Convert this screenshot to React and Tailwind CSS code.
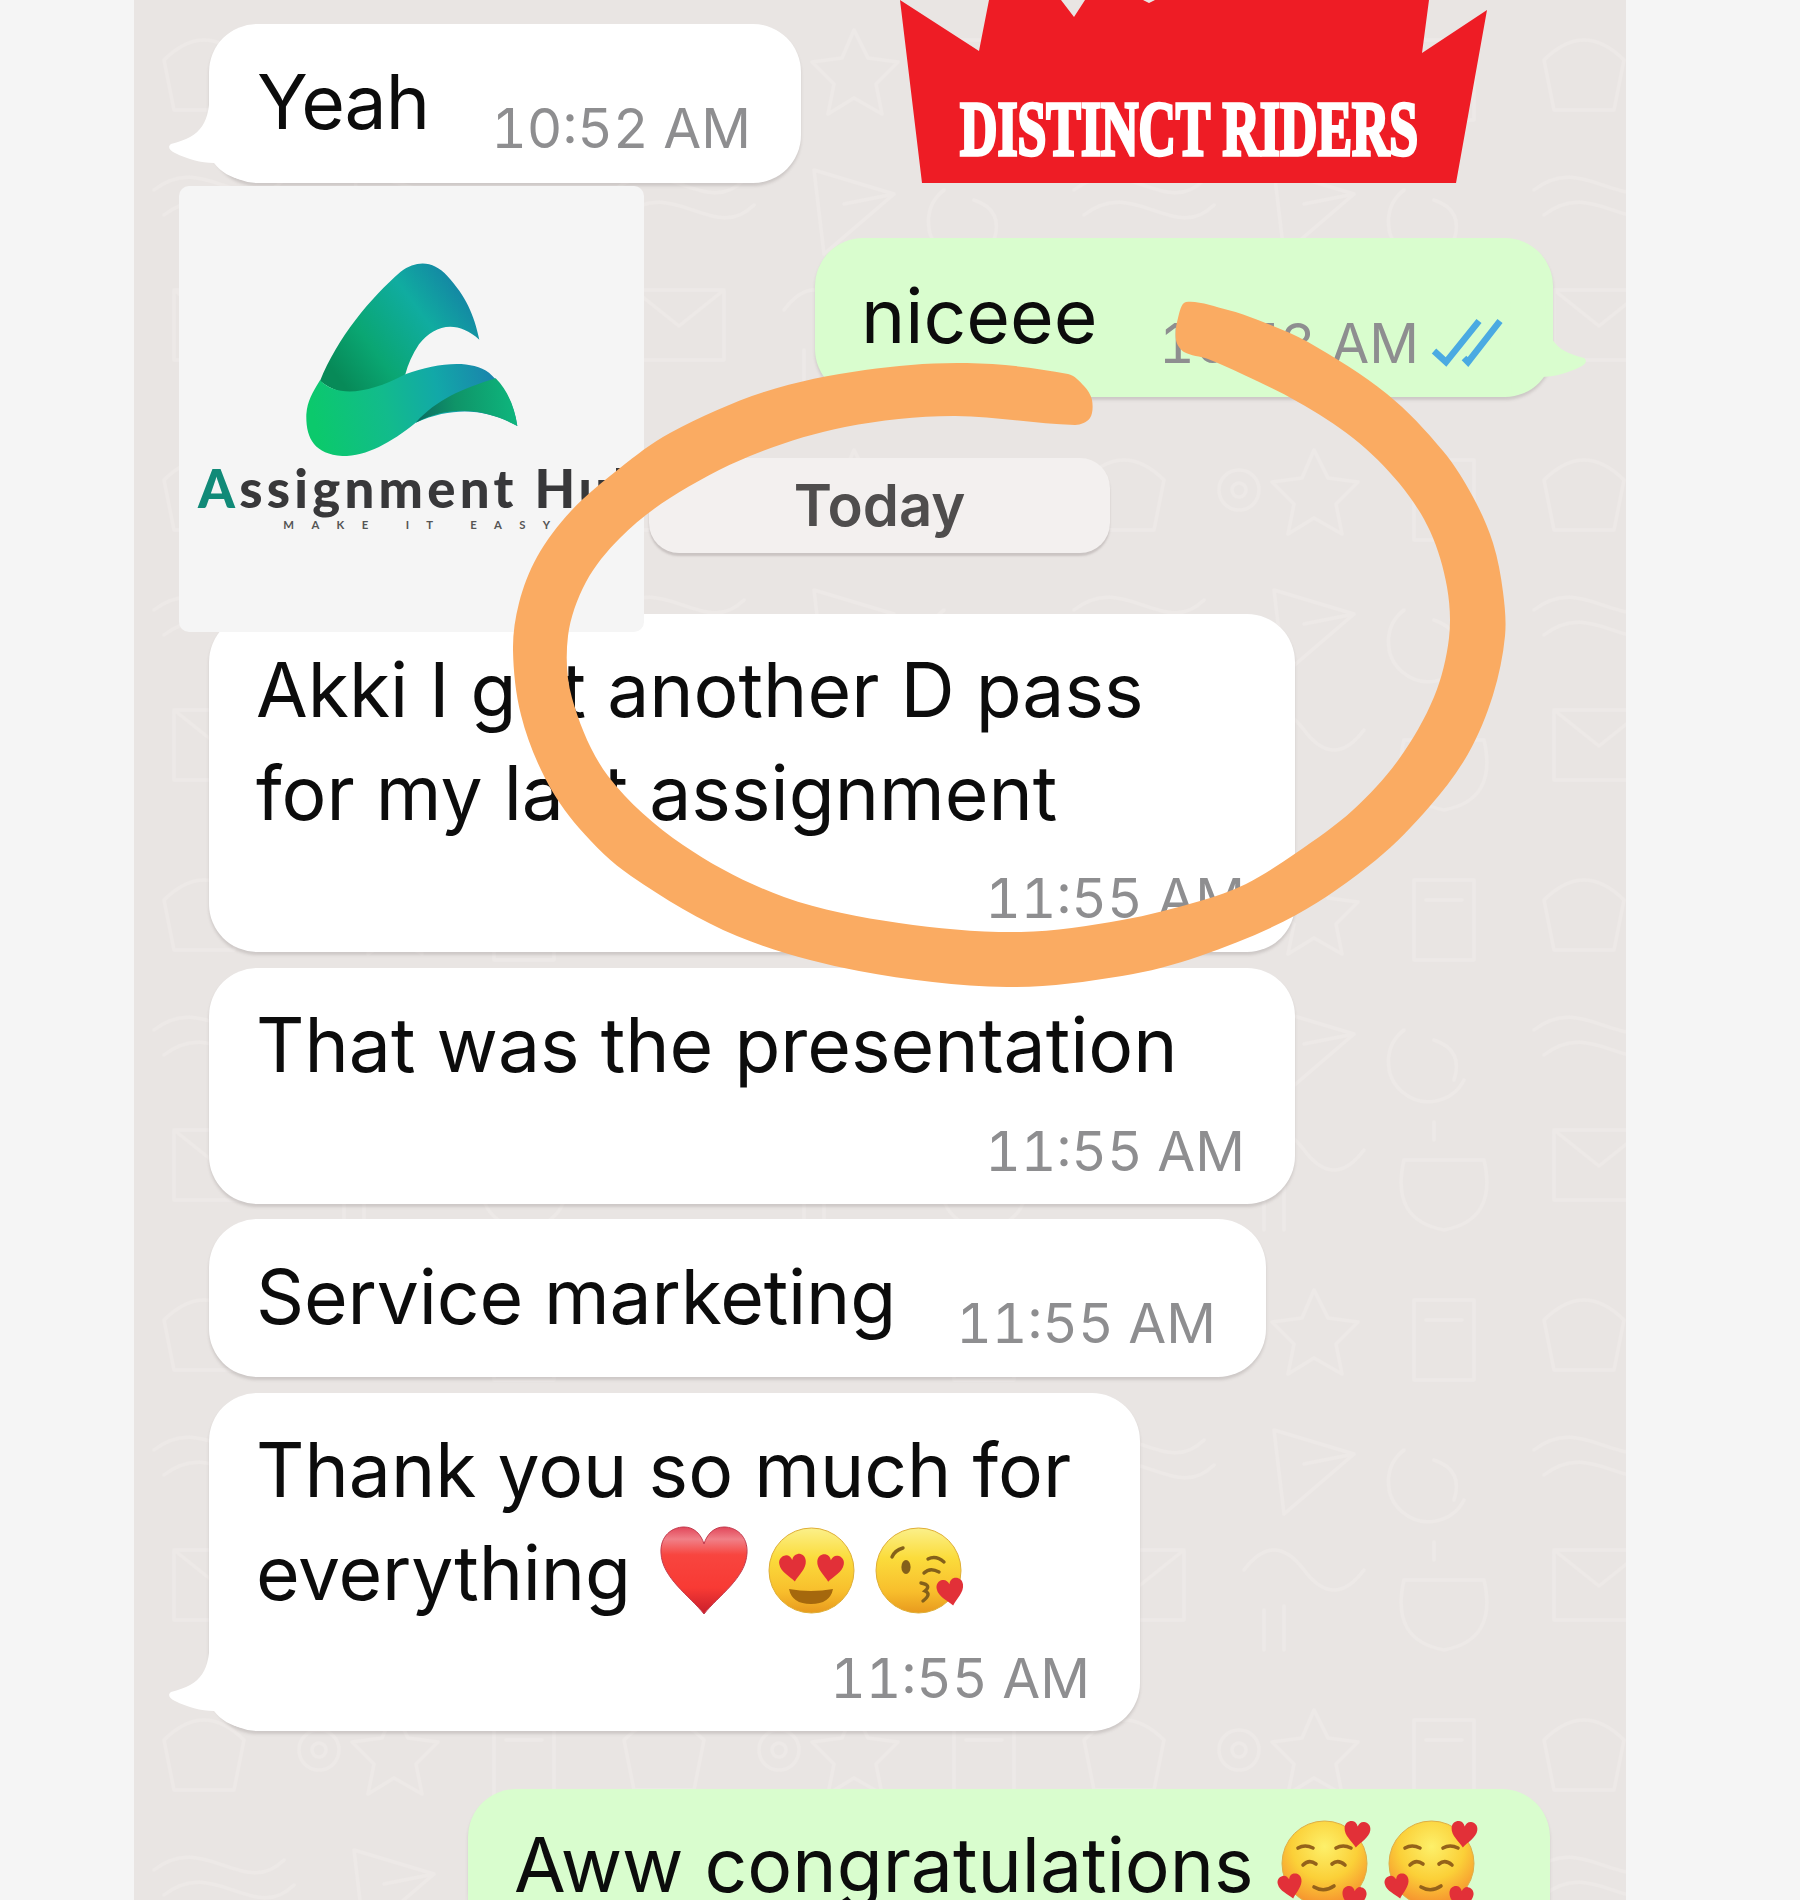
import React from "react";

const HEART = "M44 88 C30 70 2 52 1 27 C0 10 12 1 24 1 C34 1 41 8 44 18 C47 8 54 1 64 1 C76 1 88 10 87 27 C86 52 58 70 44 88Z";

// Points of the marker ring: outer edge clockwise, then inner edge back.
const OUTER = [[1186,302],[1228,310],[1258,320],[1308,342],[1387,394],[1443,451],[1473,497],[1493,543],[1503,592],[1505,636],[1493,695],[1468,754],[1430,806],[1376,860],[1296,915],[1200,956],[1122,976],[1007,987],[859,971],[737,936],[631,876],[579,828],[545,778],[521,715],[513,650],[519,603],[537,557],[571,511],[620,468],[670,433],[764,392],[865,370],[967,363],[1068,374],[1084,386]];
const INNER = [[1092,400],[1090,418],[1075,425],[953,416],[845,427],[750,456],[670,498],[620,538],[586,582],[568,636],[572,698],[608,776],[683,845],[784,897],[899,923],[1021,932],[1122,920],[1200,901],[1246,884],[1296,853],[1353,810],[1399,759],[1434,697],[1449,638],[1447,587],[1430,531],[1399,483],[1353,438],[1298,402],[1242,374],[1208,359],[1184,352],[1176,340],[1178,318]];

function smooth(points) {
  const n = points.length;
  let d = `M${points[0][0]} ${points[0][1]}`;
  for (let i = 0; i < n; i++) {
    const a = points[(i - 1 + n) % n];
    const b = points[i];
    const c = points[(i + 1) % n];
    const e = points[(i + 2) % n];
    const k = Math.hypot(c[0] - b[0], c[1] - b[1]);
    const kb = k / (k + Math.hypot(b[0] - a[0], b[1] - a[1])) / 3;
    const kc = k / (k + Math.hypot(e[0] - c[0], e[1] - c[1])) / 3;
    d += `C${b[0] + (c[0] - a[0]) * kb} ${b[1] + (c[1] - a[1]) * kb} ${c[0] - (e[0] - b[0]) * kc} ${c[1] - (e[1] - b[1]) * kc} ${c[0]} ${c[1]}`;
  }
  return d + "Z";
}

function Defs() {
  return (
    <svg className="absolute size-0" aria-hidden="true">
      <defs>
        <linearGradient id="face" x1="0" y1="0" x2="0" y2="1">
          <stop offset="0" stopColor="#fbf08a" />
          <stop offset="0.35" stopColor="#fbdc3c" />
          <stop offset="0.75" stopColor="#f8be2c" />
          <stop offset="1" stopColor="#e89a1e" />
        </linearGradient>
        <radialGradient id="blush" cx="0.5" cy="0.3" r="0.7">
          <stop offset="0" stopColor="#fdf06a" />
          <stop offset="0.55" stopColor="#fbd038" />
          <stop offset="1" stopColor="#f6902e" />
        </radialGradient>
        <linearGradient id="heart" x1="0" y1="0" x2="0" y2="1">
          <stop offset="0" stopColor="#e2475a" />
          <stop offset="0.14" stopColor="#f08088" />
          <stop offset="0.32" stopColor="#f8453f" />
          <stop offset="0.7" stopColor="#f83a34" />
          <stop offset="1" stopColor="#c81e2c" />
        </linearGradient>
      </defs>
    </svg>
  );
}

function MiniHeart({ x, y, s, r = 0 }) {
  return <path d={HEART} fill="#e23038" transform={`translate(${x} ${y}) rotate(${r}) scale(${s})`} />;
}

function RedHeart() {
  return (
    <svg viewBox="0 0 88 89" className="h-[89px] w-[88px] shrink-0">
      <path d={HEART} fill="url(#heart)" stroke="#c23a4c" strokeWidth="1" />
    </svg>
  );
}

function HeartEyes() {
  return (
    <svg viewBox="0 0 87 87" className="size-[87px] shrink-0 overflow-visible">
      <circle cx="43.5" cy="43.5" r="42.5" fill="url(#face)" stroke="#dfae35" strokeWidth="1" />
      <MiniHeart x={10} y={29} s={0.31} r={-7} />
      <MiniHeart x={50} y={26} s={0.31} r={7} />
      <path d="M21 62 Q43 66 65 62 Q62 77 43 77 Q24 77 21 62Z" fill="#a5680d" />
    </svg>
  );
}

function Kiss() {
  return (
    <svg viewBox="0 0 87 87" className="size-[87px] shrink-0 overflow-visible">
      <circle cx="43.5" cy="43.5" r="42.5" fill="url(#face)" stroke="#dfae35" strokeWidth="1" />
      <g fill="none" stroke="#84601a" strokeWidth="3.4" strokeLinecap="round">
        <path d="M17 30 Q20 23 28 21" />
        <path d="M53 32 Q61 28 69 35" />
        <path d="M49 46 Q55 40 64 45" />
        <path d="M46 56 Q57 58 50 64 Q57 67 48 74" />
      </g>
      <ellipse cx="31" cy="40" rx="4.6" ry="7" fill="#84601a" />
      <MiniHeart x={60} y={54} s={0.31} r={-10} />
    </svg>
  );
}

function Adoring() {
  return (
    <svg viewBox="0 0 87 87" className="size-[87px] shrink-0 overflow-visible">
      <circle cx="43.5" cy="43.5" r="42.5" fill="url(#blush)" stroke="#dfae45" strokeWidth="1" />
      <g fill="none" stroke="#94621a" strokeWidth="3.6" strokeLinecap="round">
        <path d="M17 28 Q24 24 32 28" />
        <path d="M55 28 Q62 24 70 28" />
        <path d="M22 45 Q28 39 35 44" />
        <path d="M51 44 Q57 39 64 45" />
        <path d="M33 67 Q43 73 53 66" />
      </g>
      <MiniHeart x={64} y={0} s={0.3} r={5} />
      <MiniHeart x={-5} y={57} s={0.28} r={-12} />
      <MiniHeart x={62} y={65} s={0.28} r={6} />
    </svg>
  );
}

function Tail({ side = "left", color, className }) {
  return (
    <svg viewBox="0 0 80 96" className={`absolute h-[96px] w-[80px] ${side === "right" ? "-scale-x-100" : ""} ${className}`}>
      <path d="M41 0 C41 38 33 50 2 58 C-2 61 1 65 6 67 C18 73 32 77 45 77 C52 86 62 92 74 94 L76 0Z" fill={color} />
    </svg>
  );
}

const bubble = "relative shrink-0 rounded-[48px] shadow-[0_3px_3px_rgba(110,100,100,0.22)]";

function Line({ children, className = "" }) {
  return <div className={`whitespace-pre text-[75px] leading-[103px] text-[#0c0c0c] ${className}`}>{children}</div>;
}

function Time({ children, className = "" }) {
  return <div className={`whitespace-pre text-[55px] leading-[60px] tabular-nums text-[#8e8e90] ${className}`}>{children}</div>;
}

function Doodles() {
  return (
    <svg className="absolute inset-0 h-full w-full">
      <defs>
        <pattern id="doodles" width="460" height="420" patternUnits="userSpaceOnUse">
          <g fill="none" stroke="#f1edeb" strokeWidth="3.5" opacity="0.5" strokeLinecap="round" strokeLinejoin="round">
            <path d="M30 60 q40 -40 80 0 l-10 50 h-60z" />
            <circle cx="185" cy="70" r="20" />
            <circle cx="185" cy="70" r="7" />
            <path d="M260 30 l14 28 30 4 -22 22 6 30 -28 -16 -26 16 6 -30 -22 -22 30 -4z" />
            <path d="M360 40 v80 M360 40 h60 v80 h-60 M372 60 h36" />
            <path d="M20 190 c50 -40 90 30 130 -10 M30 215 c50 -40 90 30 130 -10" />
            <path d="M220 170 l80 24 -70 60 z M300 194 l-50 10" />
            <path d="M350 190 a40 40 0 1 0 60 50 M380 200 q30 10 20 40" />
            <path d="M40 290 h90 v70 h-90z M40 290 l45 36 45 -36" />
            <path d="M190 310 q30 -40 60 0 q30 40 60 0 M210 350 v40 M230 346 v44" />
            <path d="M350 320 q-14 60 40 70 q54 -10 40 -70z M380 300 v-18" />
          </g>
        </pattern>
      </defs>
      <rect width="100%" height="100%" fill="url(#doodles)" />
    </svg>
  );
}

function Crown() {
  return (
    <div className="absolute left-[766px] top-0 h-[190px] w-[590px]">
      <svg viewBox="900 0 590 190" className="absolute inset-0 h-full w-full">
        <path d="M900 0 L979 51 L989 0 H1061 L1074 17 L1085 0 H1143 L1149 3 L1155 0 H1429 L1422 53 L1487 10 L1456 183 H922Z" fill="#ee1c25" />
      </svg>
      <div className="absolute left-[60px] top-[84px] w-[691px] origin-left scale-x-[0.664] whitespace-nowrap font-['Liberation_Serif',serif] text-[78px] font-bold leading-[90px] text-white [-webkit-text-stroke:3.5px_white]">
        DISTINCT RIDERS
      </div>
    </div>
  );
}

function HubCard() {
  return (
    <div className="absolute left-[45px] top-[186px] h-[446px] w-[465px] rounded-[10px] bg-[#f5f5f5]">
      <svg viewBox="25 15 1395 1338" className="h-full w-full">
        <defs>
          <linearGradient id="upper" gradientUnits="userSpaceOnUse" x1="540" y1="640" x2="900" y2="370">
            <stop offset="0" stopColor="#078a58" />
            <stop offset="0.3" stopColor="#0aa672" />
            <stop offset="0.7" stopColor="#10aca0" />
            <stop offset="1" stopColor="#1488a4" />
          </linearGradient>
          <linearGradient id="lower" gradientUnits="userSpaceOnUse" x1="430" y1="720" x2="960" y2="590">
            <stop offset="0" stopColor="#0bc96c" />
            <stop offset="0.4" stopColor="#12bb8c" />
            <stop offset="0.7" stopColor="#12a8a8" />
            <stop offset="1" stopColor="#1a86ac" />
          </linearGradient>
          <linearGradient id="fold" gradientUnits="userSpaceOnUse" x1="740" y1="720" x2="1030" y2="700">
            <stop offset="0" stopColor="#0b6c62" />
            <stop offset="0.4" stopColor="#0f9468" />
            <stop offset="1" stopColor="#0eb47c" />
          </linearGradient>
        </defs>
        <path d="M448 600 C500 470 600 350 690 272 C740 235 790 240 830 285 C885 345 910 400 926 476 C860 415 790 430 745 490 C725 520 712 550 704 580 C650 650 520 660 448 600Z" fill="url(#upper)" />
        <path d="M448 598 C500 650 590 640 704 580 C800 545 900 535 955 575 C1005 620 1030 670 1040 735 C960 690 860 670 735 725 C660 785 590 825 515 825 C430 820 405 770 407 700 C410 660 425 635 448 598Z" fill="url(#lower)" />
        <path d="M735 725 C800 655 870 625 975 592 C1012 630 1032 680 1040 735 C955 690 850 665 735 725Z" fill="url(#fold)" />
        <text x="82" y="982" textLength="1335" lengthAdjust="spacing" fill="#38383a" className="font-['Lato'] text-[158px] font-black">
          <tspan fill="#118a78">A</tspan>ssignment Hub
        </text>
        <text x="338" y="1045" textLength="800" lengthAdjust="spacing" fill="#555" className="font-['Lato'] text-[34px] font-bold">
          MAKE IT EASY
        </text>
      </svg>
    </div>
  );
}

export default function App() {
  return (
    <div className="relative h-[1900px] w-[1800px] overflow-hidden bg-[#f5f5f5] font-['Inter',sans-serif]">
      <Defs />
      <main className="relative ml-[134px] flex h-full w-[1492px] flex-col items-start bg-[#e9e5e3]">
        <Doodles />

        <div className={`${bubble} ml-[75px] mt-[24px] flex h-[159px] w-[592px] justify-between bg-white pl-[48px] pr-[50px] pt-[26px]`}>
          <Tail color="#fff" className="-left-[40px] top-[62px]" />
          <Line className="relative tracking-[-1px]">Yeah</Line>
          <Time className="relative mt-[48px]">10:52 AM</Time>
        </div>

        <div className={`${bubble} ml-[681px] mt-[55px] flex h-[159px] w-[738px] bg-[#d9fdce] pl-[46px] pt-[26px]`}>
          <Tail side="right" color="#d9fdce" className="-right-[33px] top-[62px]" />
          <Line className="relative w-[298px]">niceee</Line>
          <Time className="relative mt-[49px] w-[272px] text-[#7b917a]">10:53 AM</Time>
          <svg viewBox="0 0 72 50" className="relative mt-[54px] h-[50px] w-[72px]">
            <path d="M3 33 L15 44 L48 3 M33 40 L37 44 L69 3" fill="none" stroke="#4aaae2" strokeWidth="6.5" />
          </svg>
        </div>

        <div className="relative ml-[515px] mt-[61px] flex h-[95px] w-[461px] shrink-0 justify-center rounded-[30px] bg-[#f3f0ef] pt-[15px] text-[58px] font-semibold leading-[64px] text-[#4f4d4d] shadow-[0_3px_2px_rgba(110,100,100,0.25)]">
          Today
        </div>

        <div className={`${bubble} ml-[75px] mt-[61px] flex h-[338px] w-[1086px] flex-col bg-white pl-[47px] pr-[50px] pt-[24px]`}>
          <Line>Akki I got another D pass</Line>
          <Line>for my last assignment</Line>
          <Time className="mt-[24px] self-end">11:55 AM</Time>
        </div>

        <div className={`${bubble} ml-[75px] mt-[16px] flex h-[236px] w-[1086px] flex-col bg-white pl-[47px] pr-[50px] pt-[25px]`}>
          <Line>That was the presentation</Line>
          <Time className="mt-[25px] self-end">11:55 AM</Time>
        </div>

        <div className={`${bubble} ml-[75px] mt-[15px] flex h-[158px] w-[1057px] justify-between bg-white pl-[47px] pr-[50px] pt-[26px]`}>
          <Line className="tracking-[-0.15px]">Service marketing</Line>
          <Time className="mt-[48px]">11:55 AM</Time>
        </div>

        <div className={`${bubble} ml-[75px] mt-[16px] flex h-[338px] w-[931px] flex-col bg-white pl-[47px] pr-[50px] pt-[25px]`}>
          <Tail color="#fff" className="-left-[40px] top-[241px]" />
          <Line className="relative">Thank you so much for</Line>
          <div className="relative flex h-[103px] items-center gap-[20px]">
            <Line className="w-[384px] tracking-[-0.2px]">everything</Line>
            <div className="mb-[5px] flex items-center gap-[20px]">
              <RedHeart />
              <HeartEyes />
              <Kiss />
            </div>
          </div>
          <Time className="relative mt-[24px] self-end">11:55 AM</Time>
        </div>

        <div className={`${bubble} ml-[334px] mt-[58px] flex h-[200px] w-[1082px] items-start gap-[20px] bg-[#d9fdce] pl-[46px] pt-[24px]`}>
          <Line className="w-[747px]">Aww congratulations</Line>
          <div className="mt-[7px] flex gap-[20px]">
            <Adoring />
            <Adoring />
          </div>
        </div>

        <Crown />
        <HubCard />
      </main>
      <svg viewBox="0 0 1800 1900" className="pointer-events-none absolute inset-0 h-full w-full">
        <path d={smooth([...OUTER, ...INNER])} fill="#faab62" />
      </svg>
    </div>
  );
}
